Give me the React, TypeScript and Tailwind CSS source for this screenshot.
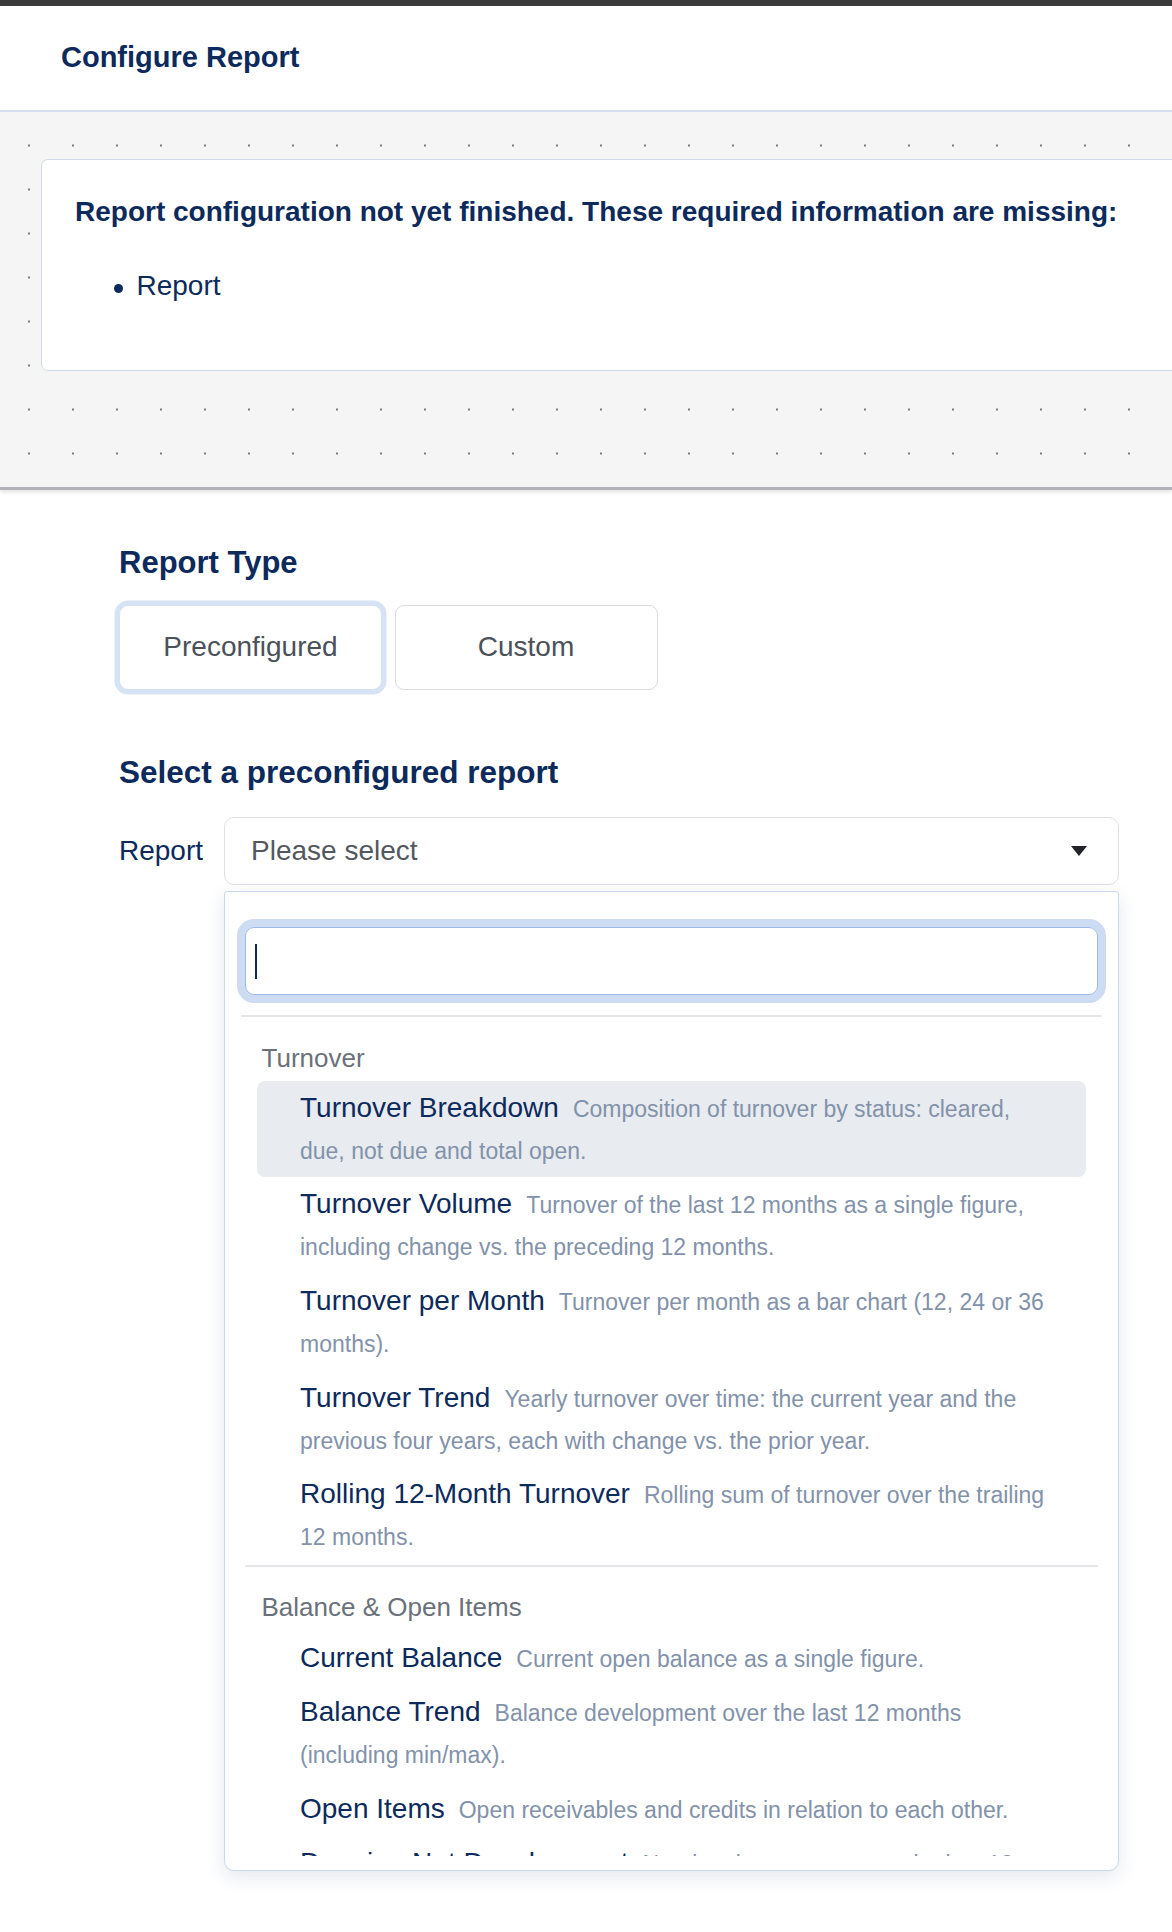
import React from "react";

type ReportOption = { title: string; description: string };
type ReportGroup = { label: string; options: ReportOption[] };

const reportGroups: ReportGroup[] = [
  {
    label: "Turnover",
    options: [
      {
        title: "Turnover Breakdown",
        description: "Composition of turnover by status: cleared, due, not due and total open.",
      },
      {
        title: "Turnover Volume",
        description:
          "Turnover of the last 12 months as a single figure, including change vs. the preceding 12 months.",
      },
      {
        title: "Turnover per Month",
        description: "Turnover per month as a bar chart (12, 24 or 36 months).",
      },
      {
        title: "Turnover Trend",
        description:
          "Yearly turnover over time: the current year and the previous four years, each with change vs. the prior year.",
      },
      {
        title: "Rolling 12-Month Turnover",
        description: "Rolling sum of turnover over the trailing 12 months.",
      },
    ],
  },
  {
    label: "Balance & Open Items",
    options: [
      { title: "Current Balance", description: "Current open balance as a single figure." },
      {
        title: "Balance Trend",
        description: "Balance development over the last 12 months (including min/max).",
      },
      { title: "Open Items", description: "Open receivables and credits in relation to each other." },
      { title: "Dunning Net Development", description: "Net dunning amount over the last 12 months." },
    ],
  },
];

function CaretDown() {
  return (
    <svg width="16" height="10" viewBox="0 0 16 10" aria-hidden="true">
      <polygon points="0,0 16,0 8,10" fill="#222428" />
    </svg>
  );
}

function OptionRow({ option, active }: { option: ReportOption; active?: boolean }) {
  return (
    <div
      className={`rounded-[8px] py-[6.3px] pl-[43px] pr-[34px] text-[28px] leading-[42px] ${
        active ? "bg-[#e8ebef]" : ""
      }`}
    >
      <span className="text-[#0c2a5b]">{option.title}</span>
      <span className="ml-[14px] text-[23px] leading-none text-[#8292aa]">{option.description}</span>
    </div>
  );
}

export default function App() {
  return (
    <div className="min-h-[1932px] bg-white font-['Liberation_Sans',Arial,sans-serif] text-[#0c2a5b]">
      <div className="h-[6px] bg-[#3b3b3b]" />

      <header className="flex h-[106px] items-center border-b-2 border-[#d7e2f0] pl-[61px]">
        <h1 className="text-[29px] font-bold">Configure Report</h1>
      </header>

      {/* validation notice on dotted canvas */}
      <section className="relative overflow-hidden border-b-[3px] border-[#b2b2ba] bg-[#f5f5f5] bg-[radial-gradient(circle,#7d7d7d_1px,transparent_1.4px)] bg-[length:44px_44px] bg-[position:7px_11.5px] pt-[47px] pb-[116px] shadow-[0_2px_4px_rgba(0,0,0,0.12)]">
        <div className="ml-[41px] w-[1200px] rounded-[7px] border-[1.5px] border-[#d1dae7] bg-white pt-[31px] pb-[63px] pl-[33px]">
          <h2 className="text-[28px] font-bold leading-[42px]">
            Report configuration not yet finished. These required information are missing:
          </h2>
          <ul className="mt-[32px]">
            <li className="flex items-center gap-[14px] pl-[38.5px] text-[28px] leading-[42px]">
              <span className="h-[9px] w-[9px] translate-y-[2px] rounded-full bg-[#0c2a5b]" />
              Report
            </li>
          </ul>
        </div>
      </section>

      <main className="pl-[119px] pr-[53px] pt-[53px]">
        <h2 className="text-[31px] font-bold leading-[40px]">Report Type</h2>
        <div className="mt-[21.5px] flex gap-[12.5px]">
          <button className="h-[85px] w-[263px] rounded-[9px] border-[1.5px] border-[#d5e2f4] bg-white text-[28px] text-[#4b5159] shadow-[0_0_0_4.5px_#d6e3f5]">
            Preconfigured
          </button>
          <button className="h-[85px] w-[263px] rounded-[9px] border-[1.5px] border-[#dcdcdc] bg-white text-[28px] text-[#4b5159]">
            Custom
          </button>
        </div>

        <h2 className="mt-[62px] text-[31.5px] font-bold leading-[40px]">Select a preconfigured report</h2>

        <div className="mt-[25.3px] flex items-center">
          <label className="w-[105px] text-[28px]">Report</label>
          <div className="relative flex-1">
            <div className="flex h-[68px] items-center justify-between rounded-[10px] border-[1.5px] border-[#dde1e6] pl-[26px] pr-[31px]">
              <span className="text-[28px] text-[#53585f]">Please select</span>
              <CaretDown />
            </div>

            {/* open dropdown */}
            <div className="absolute left-0 right-0 top-[calc(100%+6px)] rounded-t-[3px] rounded-b-[10px] border-[1.5px] border-[#cbd9ee] bg-white px-[20px] pt-[35.5px] pb-[14px] shadow-[0_6px_18px_rgba(30,60,110,0.12)]">
              <div className="flex h-[68px] items-center rounded-[9px] border-[1.5px] border-[#9cb9e7] pl-[9px] shadow-[0_0_0_8px_#cddcf2]">
                <span className="h-[35px] w-[2px] bg-[#0c2a5b]" />
              </div>
              <div className="mx-[-4px] mt-[20px] h-[1.5px] bg-[#e5e7eb]" />

              <div className="h-[839.5px] overflow-hidden px-[12px]">
                {reportGroups.map((group, gi) => (
                  <div key={group.label}>
                    {gi > 0 && <div className="mx-[-16px] mt-[1.5px] h-[1.5px] bg-[#e5e7eb]" />}
                    <div className="pt-[20.8px] pl-[4.5px] text-[26px] leading-[40px] text-[#6b717a]">
                      {group.label}
                    </div>
                    <div className="mt-[3px]">
                      {group.options.map((option, oi) => (
                        <OptionRow key={option.title} option={option} active={gi === 0 && oi === 0} />
                      ))}
                    </div>
                  </div>
                ))}
              </div>
            </div>
          </div>
        </div>
      </main>
    </div>
  );
}
